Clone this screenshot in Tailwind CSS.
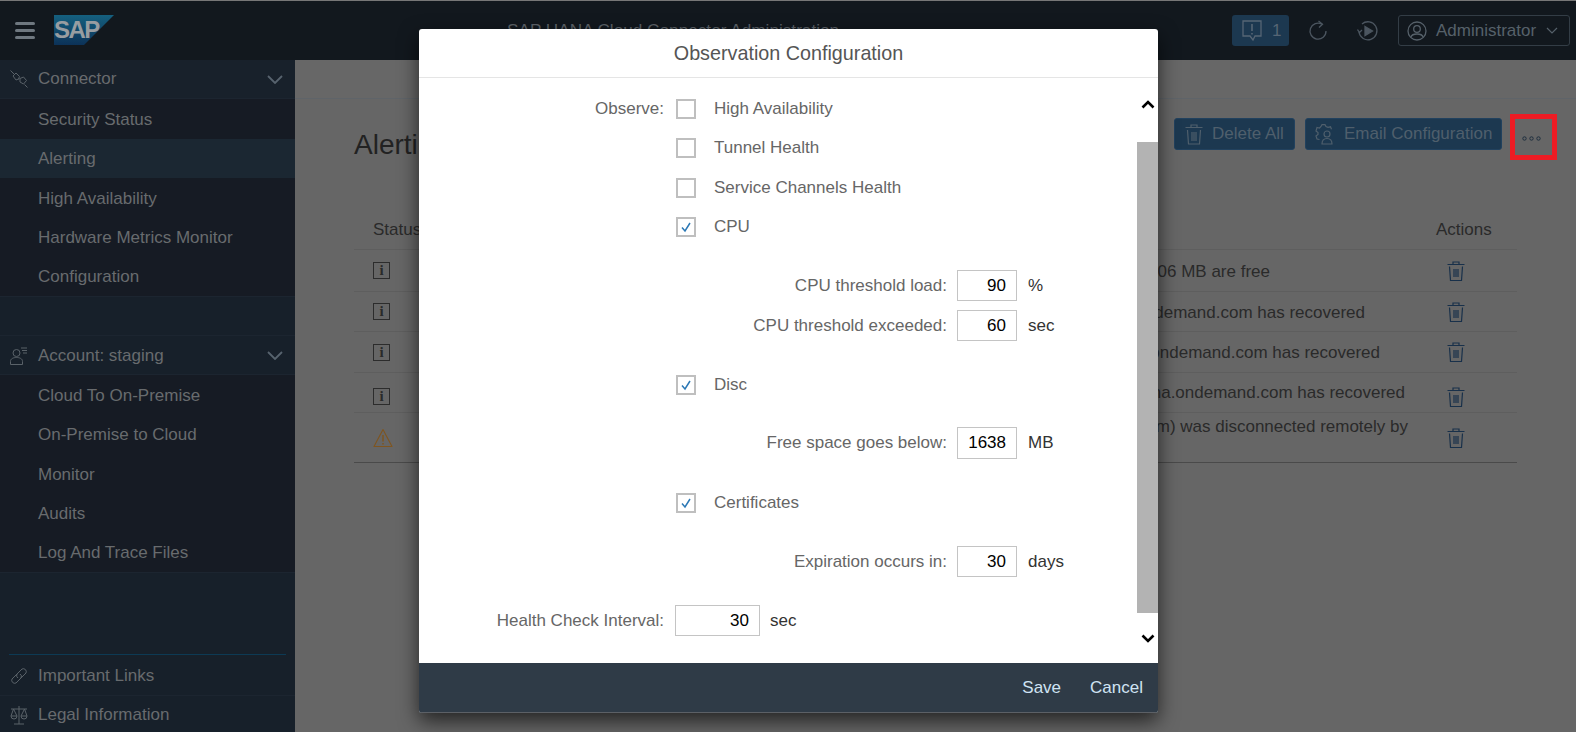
<!doctype html>
<html>
<head>
<meta charset="utf-8">
<script src="https://cdn.jsdelivr.net/npm/@tailwindcss/browser@4"></script>
</head>
<body class="m-0 overflow-hidden bg-[#666666] font-['Liberation_Sans',Arial,sans-serif]">
<div class="relative flex h-[732px] w-[1576px] flex-col overflow-hidden">

  <!-- Shell bar -->
  <header class="flex h-[60px] shrink-0 items-center border-t border-[#777777] bg-[#12181e]">
    <button class="ml-[15px] flex w-[20px] flex-col gap-[4px]">
      <span class="h-[3px] w-[20px] rounded-sm bg-[#6f7880]"></span>
      <span class="h-[3px] w-[20px] rounded-sm bg-[#6f7880]"></span>
      <span class="h-[3px] w-[20px] rounded-sm bg-[#6f7880]"></span>
    </button>
    <div class="relative ml-[19px] h-[30px] w-[60px] -translate-y-[1px]">
      <svg class="absolute inset-0" width="60" height="30" viewBox="0 0 60 30"><defs><linearGradient id="sapg" x1="0" y1="0" x2="0" y2="1"><stop offset="0" stop-color="#15607f"/><stop offset="1" stop-color="#0c3258"/></linearGradient></defs><polygon points="0,0 60,0 30,30 0,30" fill="url(#sapg)"/></svg>
      <span class="absolute left-[0px] top-[2px] text-[24px] leading-[26px] font-bold tracking-[-1.5px] text-[#989da1]">SAP</span>
    </div>
    <div class="ml-[393px] flex-1 text-[17.2px] text-[#5c6268]">SAP HANA Cloud Connector Administration</div>
    <button class="flex h-[31px] w-[57px] items-center gap-[9px] rounded-[3px] bg-[#1c3850] pl-[9px] text-[17px] text-[#566574]">
      <svg width="22" height="23" viewBox="0 0 22 23" fill="none" stroke="#566574" stroke-width="1.3"><path d="M2 2h18v15h-6l-2 4-3-4H2z"/><path d="M11 5v7M11 14v1.5" stroke-width="1.6"/></svg>
      <span>1</span>
    </button>
    <svg class="ml-[19px]" width="20" height="22" viewBox="0 0 20 22" fill="none" stroke="#4c5660" stroke-width="1.3"><path d="M14 4.2A8 8 0 1 0 18 11"/><path d="M10.5 1l4 3.2-3.5 3.2"/></svg>
    <svg class="ml-[29px]" width="22" height="22" viewBox="0 0 22 22" fill="none" stroke="#4c5660" stroke-width="1.3"><path d="M5 4a9 9 0 1 1-3 8"/><path d="M0.5 9.5l2 3 2.5-2.5"/><path d="M8 6.5l7.5 4.5L8 15.500z" fill="#4c5660"/></svg>
    <button class="ml-[19px] mr-[6px] flex h-[31px] w-[172px] items-center rounded-[3px] border border-[#333d46] pl-[8px] text-[17px] text-[#56616a]">
      <svg width="20" height="20" viewBox="0 0 20 20" fill="none" stroke="#56616a" stroke-width="1.3"><circle cx="10" cy="10" r="9"/><circle cx="10" cy="8" r="3.300"/><path d="M4 16c1-4 11-4 12 0"/></svg>
      <span class="ml-[9px]">Administrator</span>
      <svg class="ml-[10px]" width="12" height="7" viewBox="0 0 12 7" fill="none" stroke="#56616a" stroke-width="1.200"><path d="M1 1l5 5 5-5"/></svg>
    </button>
  </header>

  <div class="flex min-h-0 flex-1">
    <!-- Sidebar -->
    <aside class="flex w-[295px] shrink-0 flex-col bg-[#17202a] text-[17px] text-[#686b6e]">
      <div class="flex h-[39px] items-center border-b border-[#1c2530] bg-[#18212b] pl-[10px] pr-[12px]">
        <svg width="18" height="18" viewBox="0 0 18 18" fill="none" stroke="#5a6269" stroke-width="1"><path d="M0.500 0.500L4 4M14.500 14.500L17.500 17.500M8.500 9.500l1-1"/><path d="M3 6l3-3 3.500 3.500-1 2.500-2.500 1z"/><path d="M10 8.500l3.500-1.500 3 3.500-3 3.500-3.500-2z"/></svg>
        <span class="ml-[10px] flex-1">Connector</span>
        <svg width="16" height="9" viewBox="0 0 16 9" fill="none" stroke="#57636e" stroke-width="1.800"><path d="M1 1l7 7 7-7"/></svg>
      </div>
      <nav class="flex flex-col border-b border-[#1c2530] bg-[#161b24]">
        <a class="flex h-[40px] items-center pl-[38px] pt-[1px]">Security Status</a>
        <a class="flex h-[39px] items-center bg-[#1b2732] pl-[38px]">Alerting</a>
        <a class="flex h-[40px] items-center pl-[38px] pt-[1px]">High Availability</a>
        <a class="flex h-[39px] items-center pl-[38px] pt-[1px]">Hardware Metrics Monitor</a>
        <a class="flex h-[39px] items-center pl-[38px]">Configuration</a>
      </nav>
      <div class="h-[38px]"></div>
      <div class="flex h-[40px] items-center border-y border-[#1c2530] pl-[10px] pr-[12px] pt-[1px]">
        <svg width="18" height="18" viewBox="0 0 18 18" fill="none" stroke="#5a6269" stroke-width="1"><circle cx="6.500" cy="6" r="3.500"/><path d="M0.500 17.500v-3c0-3 3-4 6-4s6 1 6 4v3z"/><path d="M11 1h6M12 3.500h5M13 6h4"/></svg>
        <span class="ml-[10px] flex-1">Account: staging</span>
        <svg width="16" height="9" viewBox="0 0 16 9" fill="none" stroke="#57636e" stroke-width="1.800"><path d="M1 1l7 7 7-7"/></svg>
      </div>
      <nav class="flex flex-col border-b border-[#1c2530] bg-[#161b24]">
        <a class="flex h-[40px] items-center pl-[38px] pt-[1px]">Cloud To On-Premise</a>
        <a class="flex h-[39px] items-center pl-[38px] pt-[1px]">On-Premise to Cloud</a>
        <a class="flex h-[40px] items-center pl-[38px] pt-[1px]">Monitor</a>
        <a class="flex h-[39px] items-center pl-[38px]">Audits</a>
        <a class="flex h-[39px] items-center pl-[38px]">Log And Trace Files</a>
      </nav>
      <div class="flex flex-1 flex-col justify-end">
        <div class="mx-[9px] h-[1px] bg-[#0d3a54]"></div>
        <div class="flex h-[41px] items-center border-b border-[#1c2530] pl-[10px] pt-[1px]">
          <svg width="18" height="18" viewBox="0 0 18 18" fill="none" stroke="#5a6269" stroke-width="1"><path d="M7 7l-5 5a3 3 0 0 0 4 4l5-5a3 3 0 0 0-1-4"/><path d="M11 11l5-5a3 3 0 0 0-4-4L7 7a3 3 0 0 0 1 4"/></svg>
          <span class="ml-[10px]">Important Links</span>
        </div>
        <div class="flex h-[36px] items-center pl-[10px] pt-[2px]">
          <svg width="18" height="20" viewBox="0 0 18 20" fill="none" stroke="#5a6269" stroke-width="1"><path d="M9 1v18M4 19h10M1 4h16M3.500 4L1 11h6zM14.500 4L11 11h6z"/><path d="M1 11a3 3 0 0 0 6 0M11 11a3 3 0 0 0 6 0"/></svg>
          <span class="ml-[10px]">Legal Information</span>
        </div>
      </div>
    </aside>

    <!-- Main -->
    <main class="flex min-w-0 flex-1 flex-col">
      <div class="h-[39px] shrink-0 border-b border-[#5f6469] bg-[#676767]"></div>
      <div class="flex h-[112px] shrink-0 items-start justify-between pl-[59px] pr-[19px]">
        <h1 class="mt-[28px] text-[28px] leading-[36px] text-[#222222]">Alerting</h1>
        <div class="flex items-start">
          <button class="mt-[19px] flex h-[32px] w-[121px] items-center rounded-[3px] border border-[#21415e] bg-[#1c3850] pl-[10px] text-[17px] text-[#4f5f6c]">
            <svg width="18" height="21" viewBox="0 0 18 21" fill="none" stroke="#4f5f6c" stroke-width="1.200"><path d="M0.500 3.500h17M6 3.500V1h6v2.500M2.500 6l1 14h11l1-14"/><path d="M7 8v9M9 8v9M11 8v9"/></svg>
            <span class="ml-[9px]">Delete All</span>
          </button>
          <button class="ml-[10px] mt-[19px] flex h-[32px] w-[197px] items-center rounded-[3px] border border-[#21415e] bg-[#1c3850] pl-[9px] text-[17px] text-[#4f5f6c]">
            <svg width="21" height="21" viewBox="0 0 21 21" fill="none" stroke="#4f5f6c" stroke-width="1.200"><path d="M4.500 15.500L2 15l-1-3 2-1.500V8.500L1 7l1-3.500 2.500.5L6 2.500 7 0.700h3l1 1.800 2 .8 2.500-.5 1 2.500"/><circle cx="12" cy="10" r="3"/><path d="M7 20c0-4 2-5.500 5-5.500s5 1.500 5 5.500z"/></svg>
            <span class="ml-[8px]">Email Configuration</span>
          </button>
          <div class="ml-[8px] mt-[15px] flex h-[46px] w-[47px] items-center justify-center border-[5px] border-[#ed1c24] pr-[4px] pt-[3px]">
            <svg width="19" height="5" viewBox="0 0 19 5" fill="none" stroke="#1f2f3f" stroke-width="1"><circle cx="2.500" cy="2.500" r="1.700"/><circle cx="9.500" cy="2.500" r="1.700"/><circle cx="16.500" cy="2.500" r="1.700"/></svg>
          </div>
        </div>
      </div>

      <section class="mx-[59px] shrink-0 text-[17px] text-[#2a2a2a]">
        <div class="flex h-[39px] items-center justify-between border-b border-[#5e5e5e]">
          <span class="pl-[19px]">Status</span>
          <span class="w-[81px]">Actions</span>
        </div>
        <div class="flex h-[42px] items-center border-b border-[#5e5e5e]">
          <span class="ml-[19px] flex h-[17px] w-[17px] items-center justify-center border border-[#2c2c2c] font-['Liberation_Serif',serif] text-[15px] font-bold leading-none">i</span>
          <span class="flex-1 truncate pr-[150px] pt-[2px] text-right">only 1606 MB are free</span>
          <svg class="ml-[27px] mr-[52px]" width="18" height="20" viewBox="0 0 18 20" fill="none" stroke="#18304a" stroke-width="1.200"><path d="M0.500 3.500h17M6 3.500V1h6v2.500M2.500 5.500l1 14h11l1-14"/><path d="M7 8v8M9 8v8M11 8v8"/></svg>
        </div>
        <div class="flex h-[40px] items-center border-b border-[#5e5e5e]">
          <span class="ml-[19px] flex h-[17px] w-[17px] items-center justify-center border border-[#2c2c2c] font-['Liberation_Serif',serif] text-[15px] font-bold leading-none">i</span>
          <span class="flex-1 truncate pr-[55px] pt-[2px] text-right">hana.ondemand.com has recovered</span>
          <svg class="ml-[27px] mr-[52px]" width="18" height="20" viewBox="0 0 18 20" fill="none" stroke="#18304a" stroke-width="1.200"><path d="M0.500 3.500h17M6 3.500V1h6v2.500M2.500 5.500l1 14h11l1-14"/><path d="M7 8v8M9 8v8M11 8v8"/></svg>
        </div>
        <div class="flex h-[41px] items-center border-b border-[#5e5e5e]">
          <span class="ml-[19px] flex h-[17px] w-[17px] items-center justify-center border border-[#2c2c2c] font-['Liberation_Serif',serif] text-[15px] font-bold leading-none">i</span>
          <span class="flex-1 truncate pr-[40px] pt-[2px] text-right">hana.ondemand.com has recovered</span>
          <svg class="ml-[27px] mr-[52px]" width="18" height="20" viewBox="0 0 18 20" fill="none" stroke="#18304a" stroke-width="1.200"><path d="M0.500 3.500h17M6 3.500V1h6v2.500M2.500 5.500l1 14h11l1-14"/><path d="M7 8v8M9 8v8M11 8v8"/></svg>
        </div>
        <div class="flex h-[40px] items-center border-b border-[#5e5e5e]">
          <span class="ml-[19px] mt-[8px] flex h-[17px] w-[17px] items-center justify-center border border-[#2c2c2c] font-['Liberation_Serif',serif] text-[15px] font-bold leading-none">i</span>
          <span class="flex-1 truncate pr-[15px] text-right">hana.ondemand.com has recovered</span>
          <svg class="ml-[27px] mr-[52px] mt-[8px]" width="18" height="20" viewBox="0 0 18 20" fill="none" stroke="#18304a" stroke-width="1.200"><path d="M0.500 3.500h17M6 3.500V1h6v2.500M2.500 5.500l1 14h11l1-14"/><path d="M7 8v8M9 8v8M11 8v8"/></svg>
        </div>
        <div class="flex h-[50px] items-center border-b border-[#4a4a4a]">
          <svg class="ml-[19px]" width="20" height="20" viewBox="0 0 20 20" fill="none" stroke="#7f551f" stroke-width="1.100"><path d="M10 1.500l9 17H1z" stroke-linejoin="round"/><path d="M10 7v6.500M10 15v1.500" stroke-width="1.500"/></svg>
          <span class="mb-[21px] flex-1 truncate pr-[12px] text-right leading-5">(ondemand.com) was disconnected remotely by</span>
          <svg class="ml-[27px] mr-[52px]" width="18" height="20" viewBox="0 0 18 20" fill="none" stroke="#18304a" stroke-width="1.200"><path d="M0.500 3.500h17M6 3.500V1h6v2.500M2.500 5.500l1 14h11l1-14"/><path d="M7 8v8M9 8v8M11 8v8"/></svg>
        </div>
      </section>
    </main>
  </div>

  <!-- Dialog -->
  <div role="dialog" class="absolute left-[419px] top-[29px] flex h-[684px] w-[739px] flex-col overflow-hidden rounded-[3px] bg-white shadow-[0_8px_20px_rgba(0,0,0,0.65)]">
    <div class="flex h-[49px] shrink-0 items-center justify-center border-b border-[#e5e5e5] pt-[2px] text-[19.75px] text-[#555555]">Observation Configuration</div>
    <div class="flex min-h-0 flex-1">
      <form class="flex-1 pt-[11px] text-[17px] text-[#666666]">
        <div class="flex h-[39px] items-center"><span class="w-[245px] text-right">Observe:</span><span class="ml-[12px] h-[20px] w-[20px] border-2 border-[#bfbfbf]"></span><span class="ml-[18px]">High Availability</span></div>
        <div class="flex h-[40px] items-center pl-[257px]"><span class="h-[20px] w-[20px] border-2 border-[#bfbfbf]"></span><span class="ml-[18px]">Tunnel Health</span></div>
        <div class="flex h-[39px] items-center pl-[257px]"><span class="h-[20px] w-[20px] border-2 border-[#bfbfbf]"></span><span class="ml-[18px]">Service Channels Health</span></div>
        <div class="flex h-[40px] items-center pl-[257px]"><span class="flex h-[20px] w-[20px] items-center justify-center border-2 border-[#bfbfbf]"><svg width="12" height="11" viewBox="0 0 12 11" fill="none" stroke="#2b78b5" stroke-width="1.500"><path d="M2 5.500l3 3.500 5-8"/></svg></span><span class="ml-[18px]">CPU</span></div>

        <div class="mt-[23px] flex h-[31px] items-center"><span class="w-[528px] text-right">CPU threshold load:</span><span class="ml-[10px] flex h-[31px] w-[60px] items-center justify-end border border-[#c4c4c4] pr-[10px] text-black">90</span><span class="ml-[11px] text-[#333333]">%</span></div>
        <div class="mt-[9px] flex h-[31px] items-center"><span class="w-[528px] text-right">CPU threshold exceeded:</span><span class="ml-[10px] flex h-[31px] w-[60px] items-center justify-end border border-[#c4c4c4] pr-[10px] text-black">60</span><span class="ml-[11px] text-[#333333]">sec</span></div>

        <div class="mt-[24px] flex h-[40px] items-center pl-[257px]"><span class="flex h-[20px] w-[20px] items-center justify-center border-2 border-[#bfbfbf]"><svg width="12" height="11" viewBox="0 0 12 11" fill="none" stroke="#2b78b5" stroke-width="1.500"><path d="M2 5.500l3 3.500 5-8"/></svg></span><span class="ml-[18px]">Disc</span></div>
        <div class="mt-[22px] flex h-[32px] items-center"><span class="w-[528px] text-right">Free space goes below:</span><span class="ml-[10px] flex h-[32px] w-[60px] items-center justify-end border border-[#c4c4c4] pr-[10px] text-black">1638</span><span class="ml-[11px] text-[#333333]">MB</span></div>

        <div class="mt-[24px] flex h-[40px] items-center pl-[257px]"><span class="flex h-[20px] w-[20px] items-center justify-center border-2 border-[#bfbfbf]"><svg width="12" height="11" viewBox="0 0 12 11" fill="none" stroke="#2b78b5" stroke-width="1.500"><path d="M2 5.500l3 3.500 5-8"/></svg></span><span class="ml-[18px]">Certificates</span></div>
        <div class="mt-[23px] flex h-[31px] items-center"><span class="w-[528px] text-right">Expiration occurs in:</span><span class="ml-[10px] flex h-[31px] w-[60px] items-center justify-end border border-[#c4c4c4] pr-[10px] text-black">30</span><span class="ml-[11px] text-[#333333]">days</span></div>
        <div class="mt-[28px] flex h-[31px] items-center"><span class="w-[245px] text-right">Health Check Interval:</span><span class="ml-[11px] flex h-[31px] w-[85px] items-center justify-end border border-[#c4c4c4] pr-[10px] text-black">30</span><span class="ml-[10px] text-[#333333]">sec</span></div>
      </form>
      <div class="flex w-[21px] shrink-0 flex-col items-center">
        <div class="h-[64px] pt-[21px]"><svg class="block" width="14" height="10" viewBox="0 0 14 10" fill="none" stroke="#000" stroke-width="2.600"><path d="M1.500 8.500L7 3l5.500 5.500"/></svg></div>
        <div class="h-[471px] w-full bg-[#b3b3b3]"></div>
        <div class="pt-[21px]"><svg class="block" width="14" height="10" viewBox="0 0 14 10" fill="none" stroke="#000" stroke-width="2.600"><path d="M1.500 1.500L7 7l5.500-5.500"/></svg></div>
      </div>
    </div>
    <div class="flex h-[50px] shrink-0 items-center justify-end gap-[29px] border-b border-[#5c6066] bg-[#2f3b47] pr-[15px] text-[17px] text-[#cfe3f3]">
      <button>Save</button>
      <button>Cancel</button>
    </div>
  </div>
</div>
</body>
</html>
